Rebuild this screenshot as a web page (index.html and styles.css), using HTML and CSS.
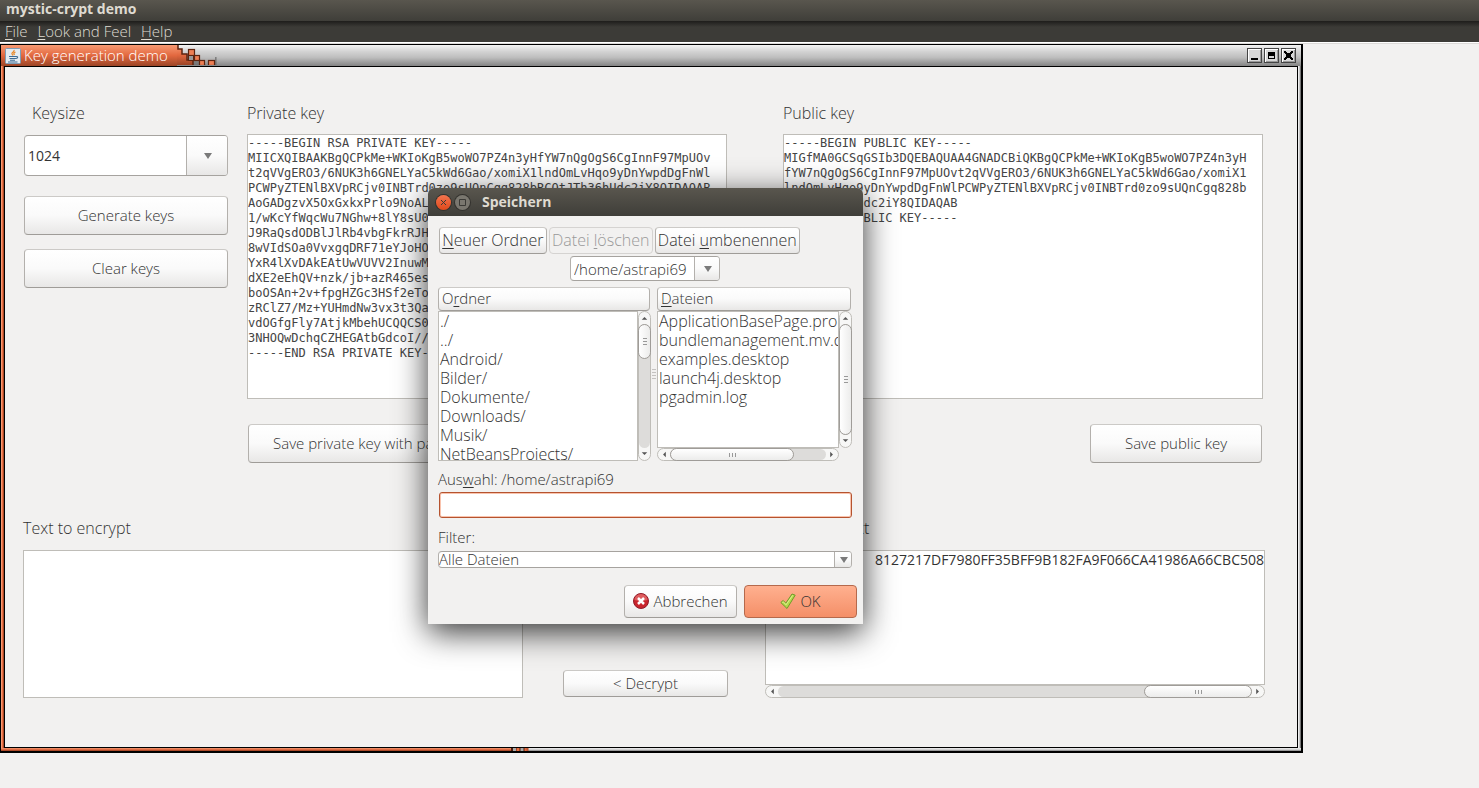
FILE: index.html
```html
<!DOCTYPE html>
<html lang="de">

<head>
    <meta charset="utf-8">
    <title>mystic-crypt demo</title>
    <link rel="stylesheet" href="styles.css">
</head>

<body>
    <header class="titlebar">mystic-crypt demo</header>
    <nav class="menubar">
        <button><u>F</u>ile</button>
        <button><u>L</u>ook and Feel</button>
        <button><u>H</u>elp</button>
    </nav>
    <main class="desktop">
        <section class="frame">
            <div class="frame-title">
                <div class="frame-name">
                    <svg class="java" viewBox="0 0 16 16">
                        <rect x="0.5" y="0.5" width="15" height="15" rx="1" fill="#e4ecf2" stroke="#7f9db5" />
                        <path d="M9 2c1 2-3 2.500-2 4l1 1.500M10.500 4c-2 1-2 1.500-1 3" fill="none" stroke="#e8892b" stroke-width="1.300" />
                        <path d="M4 8.500h7M4.500 10.500h6M5 12.200h5M11 8.500c2.500-.5 2 2-.5 2M3 14h9.500" fill="none" stroke="#3f6c94" stroke-width="1.100" />
                    </svg>
                    <span>Key generation demo</span>
                </div>
                <svg class="mosaic" viewBox="0 0 40 20">
                    <defs>
                        <linearGradient id="bump" x1="0" y1="0" x2="0" y2="1">
                            <stop offset="0" stop-color="#f79a73" />
                            <stop offset="0.500" stop-color="#e2683f" />
                            <stop offset="1" stop-color="#9c4526" />
                        </linearGradient>
                        <linearGradient id="shade">
                            <stop offset="0" stop-color="#555" stop-opacity="0.700" />
                            <stop offset="1" stop-color="#555" stop-opacity="0" />
                        </linearGradient>
                    </defs>
                    <path d="M5 9h12l12 11H10z" fill="#555" opacity="0.450" />
                    <path d="M38 12h3v8h-3z" fill="url(#shade)" />
                    <path d="M0 0h1v4h4v5h5v6h6v5H0z" fill="url(#bump)" />
                    <path d="M1 0v4h4v5h5v6h6v5" fill="none" stroke="#5e2510" stroke-width="1.500" />
                    <g fill="#ee7f54" stroke="#5e2510" stroke-width="1.200">
                        <rect x="11.500" y="4.500" width="6" height="6" />
                        <rect x="17.500" y="10.500" width="5" height="5" />
                        <rect x="22.500" y="15.500" width="5" height="5" />
                        <rect x="31.500" y="15.500" width="6" height="5" />
                    </g>
                    <rect x="11.500" y="10.500" width="5" height="5" fill="#999" stroke="#5e2510" />
                </svg>
                <div class="frame-buttons">
                    <button aria-label="Minimize"><svg viewBox="0 0 11 11"><path d="M2 8h7v2H2z" /></svg></button>
                    <button aria-label="Maximize"><svg viewBox="0 0 11 11"><path d="M2 2h7v7H2zM3 6v2h5V6z" fill-rule="evenodd" /></svg></button>
                    <button aria-label="Close"><svg viewBox="0 0 11 11"><path d="M1 1h2v1h1v1h3V2h1V1h2v2H9v1H8v3h1v1h1v2H8V9H7V8H4v1H3v1H1V8h1V7h1V4H2V3H1z" /></svg></button>
                </div>
            </div>
            <div class="frame-content">
                <div class="keys">
                    <div class="settings">
                        <label for="keysize">Keysize</label>
                        <div class="combo keysize">
                            <select id="keysize"><option>1024</option></select>
                            <span class="drop"><svg viewBox="0 0 8 6"><path d="M0 0h8L4 6z" /></svg></span>
                        </div>
                        <button class="btn">Generate keys</button>
                        <button class="btn">Clear keys</button>
                    </div>
                    <div class="key">
                        <label for="private">Private key</label>
                        <textarea id="private" spellcheck="false">-----BEGIN RSA PRIVATE KEY-----
MIICXQIBAAKBgQCPkMe+WKIoKgB5woWO7PZ4n3yHfYW7nQgOgS6CgInnF97MpUOv
t2qVVgERO3/6NUK3h6GNELYaC5kWd6Gao/xomiX1lndOmLvHqo9yDnYwpdDgFnWl
PCWPyZTENlBXVpRCjv0INBTrd0zo9sUQnCgq828bRCQtJTh36hUdc2iY8QIDAQAB
AoGADgzvX5OxGxkxPrlo9NoALU
1/wKcYfWqcWu7NGhw+8lY8sU0s
J9RaQsdODBlJlRb4vbgFkrRJHK
8wVIdSOa0VvxgqDRF71eYJoHOE
YxR4lXvDAkEAtUwVUVV2InuwMF
dXE2eEhQV+nzk/jb+azR465es6
boOSAn+2v+fpgHZGc3HSf2eTou
zRClZ7/Mz+YUHmdNw3vx3t3Qa2
vdOGfgFly7AtjkMbehUCQQCS02
3NHOQwDchqCZHEGAtbGdcoI//f
-----END RSA PRIVATE KEY-----</textarea>
                        <button class="btn save-private">Save private key with password</button>
                    </div>
                    <div class="key">
                        <label for="public">Public key</label>
                        <textarea id="public" spellcheck="false">-----BEGIN PUBLIC KEY-----
MIGfMA0GCSqGSIb3DQEBAQUAA4GNADCBiQKBgQCPkMe+WKIoKgB5woWO7PZ4n3yH
fYW7nQgOgS6CgInnF97MpUOvt2qVVgERO3/6NUK3h6GNELYaC5kWd6Gao/xomiX1
lndOmLvHqo9yDnYwpdDgFnWlPCWPyZTENlBXVpRCjv0INBTrd0zo9sUQnCgq828b
RCQtJTh36hUdc2iY8QIDAQAB
-----END PUBLIC KEY-----</textarea>
                        <button class="btn save-public">Save public key</button>
                    </div>
                </div>
                <div class="texts">
                    <div class="text">
                        <label for="plain">Text to encrypt</label>
                        <textarea id="plain"></textarea>
                    </div>
                    <button class="btn decrypt">&lt; Decrypt</button>
                    <div class="text">
                        <label for="encrypted">Encrypted text</label>
                        <textarea id="encrypted" class="hex" spellcheck="false">8127217DF7980FF35BFF9B182FA9F066CA41986A66CBC508</textarea>
                        <div class="scroll hscroll">
                            <svg class="arrow" viewBox="0 0 12 12"><path d="M8 3v6L5 6z" /></svg>
                            <div class="track"><div class="thumb at-end"></div></div>
                            <svg class="arrow" viewBox="0 0 12 12"><path d="M4 3v6l3-3z" /></svg>
                        </div>
                    </div>
                </div>
            </div>
            <div class="frame-bottom"></div>
        </section>
    </main>

    <section class="dialog" role="dialog" aria-label="Speichern">
        <div class="dialog-title">
            <button class="round close" aria-label="Schließen"><svg viewBox="0 0 15 15"><path d="M5 5l5 5M10 5l-5 5" /></svg></button>
            <button class="round" aria-label="Maximieren"><svg viewBox="0 0 15 15"><path d="M4.500 4.500h6v6h-6z" /></svg></button>
            <span>Speichern</span>
        </div>
        <div class="dialog-body">
            <div class="actions">
                <button class="btn"><u>N</u>euer Ordner</button>
                <button class="btn" disabled>Datei <u>l</u>öschen</button>
                <button class="btn">Datei <u>u</u>mbenennen</button>
            </div>
            <div class="combo path">
                <select aria-label="Pfad"><option>/home/astrapi69</option></select>
                <span class="drop"><svg viewBox="0 0 8 6"><path d="M0 0h8L4 6z" /></svg></span>
            </div>
            <div class="lists">
                <div class="pane">
                    <button class="btn head">O<u>r</u>dner</button>
                    <div class="pane-body">
                        <ul class="list">
                            <li>./</li>
                            <li>../</li>
                            <li>Android/</li>
                            <li>Bilder/</li>
                            <li>Dokumente/</li>
                            <li>Downloads/</li>
                            <li>Musik/</li>
                            <li>NetBeansProjects/</li>
                        </ul>
                        <div class="scroll vscroll">
                            <svg class="arrow" viewBox="0 0 12 12"><path d="M3 8h6L6 5z" /></svg>
                            <div class="track"><div class="thumb short"></div></div>
                            <svg class="arrow" viewBox="0 0 12 12"><path d="M3 4h6L6 7z" /></svg>
                        </div>
                    </div>
                </div>
                <div class="divider"></div>
                <div class="pane">
                    <button class="btn head"><u>D</u>ateien</button>
                    <div class="pane-body files">
                        <ul class="list">
                            <li>ApplicationBasePage.properties</li>
                            <li>bundlemanagement.mv.db</li>
                            <li>examples.desktop</li>
                            <li>launch4j.desktop</li>
                            <li>pgadmin.log</li>
                        </ul>
                        <div class="scroll vscroll">
                            <svg class="arrow" viewBox="0 0 12 12"><path d="M3 8h6L6 5z" /></svg>
                            <div class="track"><div class="thumb full"></div></div>
                            <svg class="arrow" viewBox="0 0 12 12"><path d="M3 4h6L6 7z" /></svg>
                        </div>
                        <div class="scroll hscroll">
                            <svg class="arrow" viewBox="0 0 12 12"><path d="M8 3v6L5 6z" /></svg>
                            <div class="track"><div class="thumb at-start"></div></div>
                            <svg class="arrow" viewBox="0 0 12 12"><path d="M4 3v6l3-3z" /></svg>
                        </div>
                    </div>
                </div>
            </div>
            <label for="selection">Aus<u>w</u>ahl: /home/astrapi69</label>
            <input id="selection" class="selection" type="text">
            <label for="filter">Filter:</label>
            <div class="combo filter">
                <select id="filter"><option>Alle Dateien</option></select>
                <span class="drop"><svg viewBox="0 0 8 6"><path d="M0 0h8L4 6z" /></svg></span>
            </div>
            <div class="confirm">
                <button class="btn">
                    <svg viewBox="0 0 16 16">
                        <circle cx="8" cy="8" r="7.500" fill="#c9252d" stroke="#8f1d2a" />
                        <path d="M1.500 7a6.500 6 0 0 1 13 0q-6.500 2-13 0z" fill="#e57373" opacity="0.700" />
                        <path d="M5 5l6 6M11 5l-6 6" stroke="#fff" stroke-width="2.500" />
                    </svg>
                    Abbrechen
                </button>
                <button class="btn ok">
                    <svg viewBox="0 0 16 16">
                        <path d="M0.800 9.500l2.400-2 2.600 2.700L12 1l3.200 1.200L7 15.500z" fill="#b4d94c" stroke="#6f9a2a" stroke-linejoin="round" />
                        <path d="M2.300 9.500l1-.7 2.700 3L12.700 2.300" fill="none" stroke="#dff08f" />
                    </svg>
                    OK
                </button>
            </div>
        </div>
    </section>
</body>

</html>
```

FILE: styles.css
```css
* {
    box-sizing: border-box;
}

body {
    margin: 0;
    background: #f2f1f0;
    color: #333;
    font: 300 15px/18px "Open Sans", "Noto Sans", sans-serif;
}

button,
select,
input,
textarea {
    margin: 0;
    padding: 0;
    font: inherit;
    color: inherit;
}

u {
    text-underline-offset: 2px;
}

svg,
label,
textarea {
    display: block;
}

/* application window */

.titlebar {
    height: 21px;
    padding-left: 6px;
    background: linear-gradient(#59564e, #3f3e39);
    color: #dfdbd2;
    font-size: 14px;
    font-weight: 700;
}

.menubar {
    display: flex;
    gap: 10px;
    height: 23px;
    padding-left: 5px;
    background: linear-gradient(#1e1d1b, #3c3b37 6px);
    border-bottom: 1px solid #dcdad8;
    box-shadow: inset 0 -1px #fff;
    color: #dfdbd2;
}

.menubar button {
    height: 20px;
    border: 0;
    background: none;
}

.desktop {
    padding-right: 176px;
}

/* internal frame */

.frame {
    border: 1px solid #000;
    border-width: 1px 2px 2px 1px;
    background: linear-gradient(90deg, #f79a73 1px, #e86f43 1px, #e86f43 2px, #a5492a 2px, #a5492a 3px, transparent 3px),
        linear-gradient(270deg, #777 1px, #c8c8c8 1px, #c8c8c8 2px, #eee 2px);
}

.frame-title {
    display: flex;
    height: 21px;
    background: linear-gradient(#f4f4f4, #d4d4d4 30%, #bdbdbd 60%, #848484);
}

.frame-name {
    display: flex;
    gap: 3px;
    width: 176px;
    padding-left: 4px;
    background: linear-gradient(#f79a73, #e2683f 50%, #9c4526);
    color: #fff;
    line-height: 20px;
    white-space: nowrap;
}

.java {
    width: 16px;
    height: 16px;
    margin-top: 3px;
}

.mosaic {
    width: 40px;
    height: 20px;
}

.frame-buttons {
    display: flex;
    gap: 2px;
    margin: 3px 5px 0 auto;
}

.frame-buttons button {
    width: 15px;
    height: 15px;
    border: 1px solid #444;
    background: #d8d8d8;
    box-shadow: inset 1px 1px #fff, inset -1px -1px #999;
}

.frame-buttons svg {
    width: 11px;
    height: 11px;
    margin: 1px;
}

.frame-content {
    margin: 0 3px;
    padding: 37px 32px 49px 18px;
    border: 1px solid #000;
    background: #f2f1f0;
}

.frame-content label {
    font-size: 16px;
}

.frame-bottom {
    height: 3px;
    background: linear-gradient(90deg, #4a1d0c 2px, #aaa 2px, #aaa 5px, #4a1d0c 5px, #e86f43 6px, #e86f43 8px, #4a1d0c 9px, #aaa 10px, #aaa 12px, #4a1d0c 13px, #e86f43 14px, #b5502e 17px, transparent 18px) 510px 0 / 18px 3px no-repeat,
        linear-gradient(#f79a73, #d8623a 60%, #8d3a1d) 0 0 / 510px 3px no-repeat,
        linear-gradient(#eee, #ccc 60%, #777);
}

.btn {
    height: 39px;
    padding-bottom: 2px;
    border: 1px solid #b3b0ac;
    border-color: #cccac7 #b3b0ac #9f9c98;
    border-radius: 4px;
    background: linear-gradient(#fff, #fafafa 50%, #e8e7e6);
    white-space: nowrap;
}

.combo {
    position: relative;
    display: flex;
    height: 25px;
    border: 1px solid #b3b0ac;
    border-color: #a6a39f #b3b0ac #a6a39f;
    border-radius: 4px;
    background: #fff;
    overflow: hidden;
}

.combo select {
    flex: 1;
    padding-left: 3px;
    border: 0;
    background: none;
    appearance: none;
    outline: none;
}

.drop {
    position: absolute;
    top: 0;
    right: 0;
    bottom: 0;
    display: grid;
    place-items: center;
    width: 25px;
    padding-left: 2px;
    border-left: 1px solid #b3b0ac;
    background: linear-gradient(#fff, #fafafa 50%, #e8e7e6);
    pointer-events: none;
}

.drop svg {
    width: 8px;
    height: 6px;
    fill: #7a7a7a;
}

textarea {
    width: 100%;
    border: 1px solid #bfbdb8;
    background: #fff;
    outline: none;
    resize: none;
    overflow: hidden;
}

.keys {
    display: grid;
    grid-template-columns: 206px calc(50% - 122px) 1fr;
    margin-right: 2px;
}

.settings {
    display: flex;
    flex-direction: column;
    padding: 0 1px;
}

.settings label {
    margin: 0 0 13px 8px;
}

.settings .btn {
    margin-bottom: 14px;
}

.keysize {
    height: 41px;
    margin-bottom: 20px;
    font-size: 14px;
    font-weight: 400;
}

.keysize .drop {
    width: 41px;
}

.key {
    margin-left: 18px;
}

.key + .key {
    margin-left: 56px;
}

.key textarea {
    height: 265px;
    margin: 12px 0 25px;
    padding-top: 1px;
    color: #444;
    font: 12px/15px "DejaVu Sans Mono", monospace;
}

.save-private {
    margin-left: 1px;
    padding: 0 24px 2px;
}

.save-public {
    display: block;
    width: 172px;
    margin: 0 1px 0 auto;
}

.texts {
    display: flex;
    align-items: flex-end;
    margin-top: 56px;
}

.text {
    flex: 1;
}

.text textarea {
    height: 148px;
    margin-top: 13px;
}

.text .hex {
    height: 135px;
    text-align: right;
    font-size: 14px;
    font-weight: 400;
    white-space: pre;
}

.decrypt {
    width: 165px;
    height: 27px;
    margin: 0 37px 1px 40px;
}

/* scroll bars */

.scroll {
    display: flex;
    border: 1px solid #bfbdb8;
    border-radius: 7px;
    background: #f7f7f6;
}

.hscroll {
    height: 13px;
}

.vscroll {
    flex-direction: column;
    width: 13px;
}

.arrow {
    flex: none;
    width: 12px;
    height: 11px;
    fill: #555;
}

.track {
    flex: 1;
    display: flex;
    border-radius: 7px;
    background: #dddcda;
}

.thumb {
    display: grid;
    place-items: center;
    margin: -1px 0;
    border: 1px solid #9f9c98;
    border-radius: 7px;
    background: linear-gradient(#fff, #ececeb);
}

.thumb::after {
    content: '';
    width: 7px;
    height: 4px;
    background: repeating-linear-gradient(90deg, #999 0, #999 1px, transparent 1px, transparent 3px);
}

.vscroll .track {
    flex-direction: column;
}

.vscroll .arrow {
    width: 11px;
    height: 12px;
}

.vscroll .thumb {
    margin: 0 -1px;
    background: linear-gradient(90deg, #fff, #ececeb);
}

.vscroll .thumb::after {
    width: 4px;
    height: 7px;
    background: repeating-linear-gradient(#999 0, #999 1px, transparent 1px, transparent 3px);
}

.at-end {
    width: 108px;
    margin-left: auto;
}

.at-start {
    width: 124px;
}

.short {
    height: 35px;
}

.full {
    flex: 1;
}

/* save dialog */

.dialog {
    position: absolute;
    top: 188px;
    left: 428px;
    width: 435px;
    border-radius: 6px 6px 0 0;
    background: #f2f1f0;
    box-shadow: 0 8px 32px rgba(0, 0, 0, 0.8);
}

.dialog-title {
    display: flex;
    align-items: center;
    gap: 4px;
    height: 28px;
    padding-left: 8px;
    border-radius: 6px 6px 0 0;
    background: linear-gradient(#59564e, #3f3e39);
    color: #dfdbd2;
    font-size: 14px;
    font-weight: 700;
}

.dialog-title span {
    margin-left: 8px;
}

.round {
    width: 15px;
    height: 15px;
    border: 0;
    border-radius: 50%;
    background: #7a776f;
    box-shadow: 0 0 0 1px #33322e;
}

.round svg {
    width: 15px;
    height: 15px;
    fill: none;
    stroke: #3b3a36;
}

.round.close {
    background: linear-gradient(#f4744e, #df4a1c);
}

.dialog-body {
    padding: 11px 11px 6px 10px;
}

.actions {
    display: flex;
    gap: 2px;
    margin: 0 52px 2px 1px;
    font-size: 16px;
}

.actions .btn {
    flex: auto;
    height: 27px;
}

.btn:disabled {
    border-color: #d5d3d1;
    background: #f2f1f0;
    color: #999;
}

.path {
    width: 150px;
    margin: 0 auto 6px;
}

.lists {
    display: grid;
    grid-template-columns: 213px 6px 1fr;
    margin-bottom: 9px;
}

.pane {
    min-width: 0;
}

.head {
    display: block;
    width: calc(100% - 1px);
    height: 24px;
    padding-left: 3px;
    text-align: left;
}

.pane-body {
    display: grid;
    grid-template-columns: minmax(0, 1fr) 13px;
    height: 150px;
}

.files {
    grid-template-rows: 137px 13px;
}

.list {
    margin: 0;
    padding: 0 1px;
    border: 1px solid #bfbdb8;
    background: #fff;
    font-size: 16px;
    line-height: 19px;
    list-style: none;
    white-space: nowrap;
    overflow: hidden;
}

.divider {
    width: 4px;
    height: 10px;
    margin: 82px 1px;
    background: repeating-linear-gradient(#c4c2c0 0, #c4c2c0 1px, transparent 1px, transparent 3px);
}

.selection {
    display: block;
    width: calc(100% - 1px);
    height: 26px;
    margin: 4px 0 10px 1px;
    border: 1px solid #b5532f;
    border-radius: 3px;
    background: #fff;
    box-shadow: inset 0 0 0 1px #f9c3ad;
    outline: none;
}

.filter {
    height: 17px;
    margin: 5px 0 17px;
}

.filter select {
    padding-left: 0;
    line-height: 15px;
}

.filter .drop {
    width: 17px;
}

.confirm {
    display: flex;
    justify-content: flex-end;
    gap: 7px;
    margin-right: -5px;
}

.confirm .btn {
    display: flex;
    align-items: center;
    justify-content: center;
    gap: 4px;
    width: 113px;
    height: 33px;
}

.confirm svg {
    width: 16px;
    height: 16px;
}

.confirm .ok {
    border-color: #b5694c;
    background: linear-gradient(#ffb08f, #f48f68);
}
```
